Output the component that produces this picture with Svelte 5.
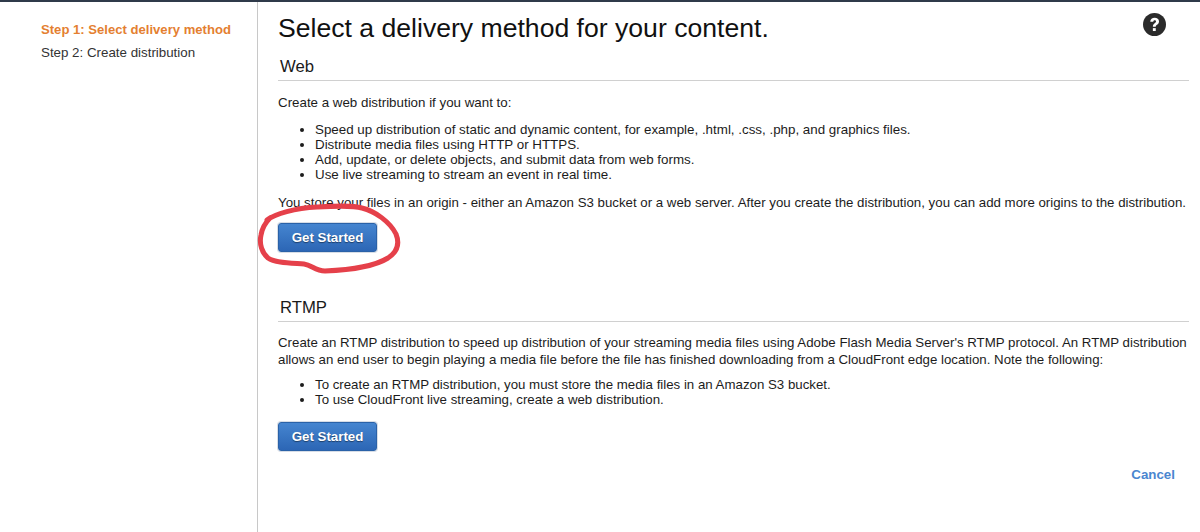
<script>
  const webItems = [
    'Speed up distribution of static and dynamic content, for example, .html, .css, .php, and graphics files.',
    'Distribute media files using HTTP or HTTPS.',
    'Add, update, or delete objects, and submit data from web forms.',
    'Use live streaming to stream an event in real time.'
  ];
  const rtmpItems = [
    'To create an RTMP distribution, you must store the media files in an Amazon S3 bucket.',
    'To use CloudFront live streaming, create a web distribution.'
  ];
</script>

<div class="page">
  <nav class="side">
    <div class="step active">Step 1: Select delivery method</div>
    <div class="step">Step 2: Create distribution</div>
  </nav>
  <main class="main">
    <div class="title-row">
      <h1>Select a delivery method for your content.</h1>
      <svg class="help" viewBox="0 0 24 24" width="23" height="23" aria-hidden="true">
        <circle cx="12" cy="12" r="12" fill="#2b2b2b" />
        <path d="M7.6 9.2c0-2.700 2-4.200 4.600-4.200 2.500 0 4.500 1.400 4.500 3.800 0 1.700-.9 2.600-2.100 3.400-1 .7-1.300 1.100-1.300 2.100h-3c0-1.900.6-2.800 1.900-3.700.9-.6 1.400-1 1.400-1.700 0-.8-.6-1.300-1.400-1.300-.9 0-1.500.6-1.500 1.600z" fill="#fff" />
        <rect x="10.300" y="15.800" width="3" height="3" fill="#fff" />
      </svg>
    </div>

    <h2 class="web-head">Web</h2>
    <p class="lead">Create a web distribution if you want to:</p>
    <ul>
      {#each webItems as item}<li>{item}</li>{/each}
    </ul>
    <p class="store">You store your files in an origin - either an Amazon S3 bucket or a web server. After you create the distribution, you can add more origins to the distribution.</p>
    <button class="btn">Get Started</button>

    <h2 class="rtmp-head">RTMP</h2>
    <p class="rtmp-text">Create an RTMP distribution to speed up distribution of your streaming media files using Adobe Flash Media Server's RTMP protocol. An RTMP distribution allows an end user to begin playing a media file before the file has finished downloading from a CloudFront edge location. Note the following:</p>
    <ul class="rtmp-list">
      {#each rtmpItems as item}<li>{item}</li>{/each}
    </ul>
    <button class="btn second">Get Started</button>
    <div class="foot"><a href="#cancel">Cancel</a></div>
  </main>

  <svg class="scribble" viewBox="0 0 1200 532" width="1200" height="532" aria-hidden="true">
    <path d="M267 220 C275 214 295 208 317 207 C335 206 352 205 362 208 C375 211 390 222 396 234 C400 244 397 252 388 258 C375 266 350 270 325 271 C315 271 312 265 304 264 C290 263 275 263 268 258 C262 253 259 244 261 235 C262 229 264 224 270 218" fill="none" stroke="#e5404a" stroke-width="5" stroke-linecap="round" />
  </svg>
</div>

<style>
  :global(body) {
    margin: 0;
    background: #fff;
  }
  .page {
    position: relative;
    display: flex;
    width: 1200px;
    height: 532px;
    overflow: hidden;
    box-sizing: border-box;
    border-top: 2px solid #2f3a4a;
    font-family: "Liberation Sans", Arial, sans-serif;
    font-size: 13.33px;
    line-height: 15px;
    color: #1c1c1c;
  }
  .side {
    width: 258px;
    flex: none;
    box-sizing: border-box;
    padding: 20px 0 0 41px;
    border-right: 1px solid #c8c8c8;
  }
  .step {
    height: 23px;
    color: #333;
  }
  .step.active {
    color: #e47f31;
    font-weight: 700;
    font-size: 13.1px;
  }
  .main {
    flex: 1;
    min-width: 0;
    padding-left: 20px;
    padding-right: 11px;
  }
  .title-row {
    display: flex;
    justify-content: space-between;
    align-items: flex-start;
    height: 38px;
    padding-top: 11px;
  }
  h1 {
    margin: 0;
    font-size: 26.6px;
    line-height: 30px;
    font-weight: 400;
    color: #111;
  }
  .help {
    margin-right: 23px;
  }
  h2 {
    margin: 0;
    font-size: 16.7px;
    line-height: 22px;
    font-weight: 400;
    color: #1a1a1a;
    padding-left: 2px;
    padding-bottom: 2px;
    border-bottom: 1px solid #d0d0d0;
  }
  .web-head {
    margin-top: 5px;
    margin-bottom: 14px;
  }
  .rtmp-head {
    margin-top: 45px;
    margin-bottom: 12px;
  }
  p {
    margin: 0;
  }
  .lead {
    margin-bottom: 12px;
  }
  ul {
    margin: 0;
    padding: 0 0 0 37px;
    font-size: 13.36px;
  }
  .store {
    margin-top: 13px;
    white-space: nowrap;
    font-size: 13.27px;
  }
  .rtmp-text {
    line-height: 17px;
    margin-bottom: 9px;
    margin-right: -4px;
    font-size: 13.28px;
  }
  .rtmp-list {
    font-size: 13.28px;
  }
  .btn {
    display: block;
    width: 99px;
    height: 29px;
    margin-top: 13px;
    padding: 0;
    border: 1px solid #2a62a8;
    border-radius: 3px;
    background: linear-gradient(#4585d0, #2c66b5);
    color: #fff;
    font: 700 13.3px "Liberation Sans", Arial, sans-serif;
    text-shadow: 0 1px 1px rgba(0, 0, 0, 0.45);
    box-shadow: 0 0 0 1px #d7dde6;
  }
  .second {
    margin-top: 15px;
  }
  .foot {
    display: flex;
    justify-content: flex-end;
    margin-top: 16px;
    padding-right: 14px;
  }
  .foot a {
    color: #4a86d0;
    font-weight: 700;
    text-decoration: none;
  }
  .scribble {
    position: absolute;
    left: 0;
    top: -2px;
    pointer-events: none;
  }
</style>
